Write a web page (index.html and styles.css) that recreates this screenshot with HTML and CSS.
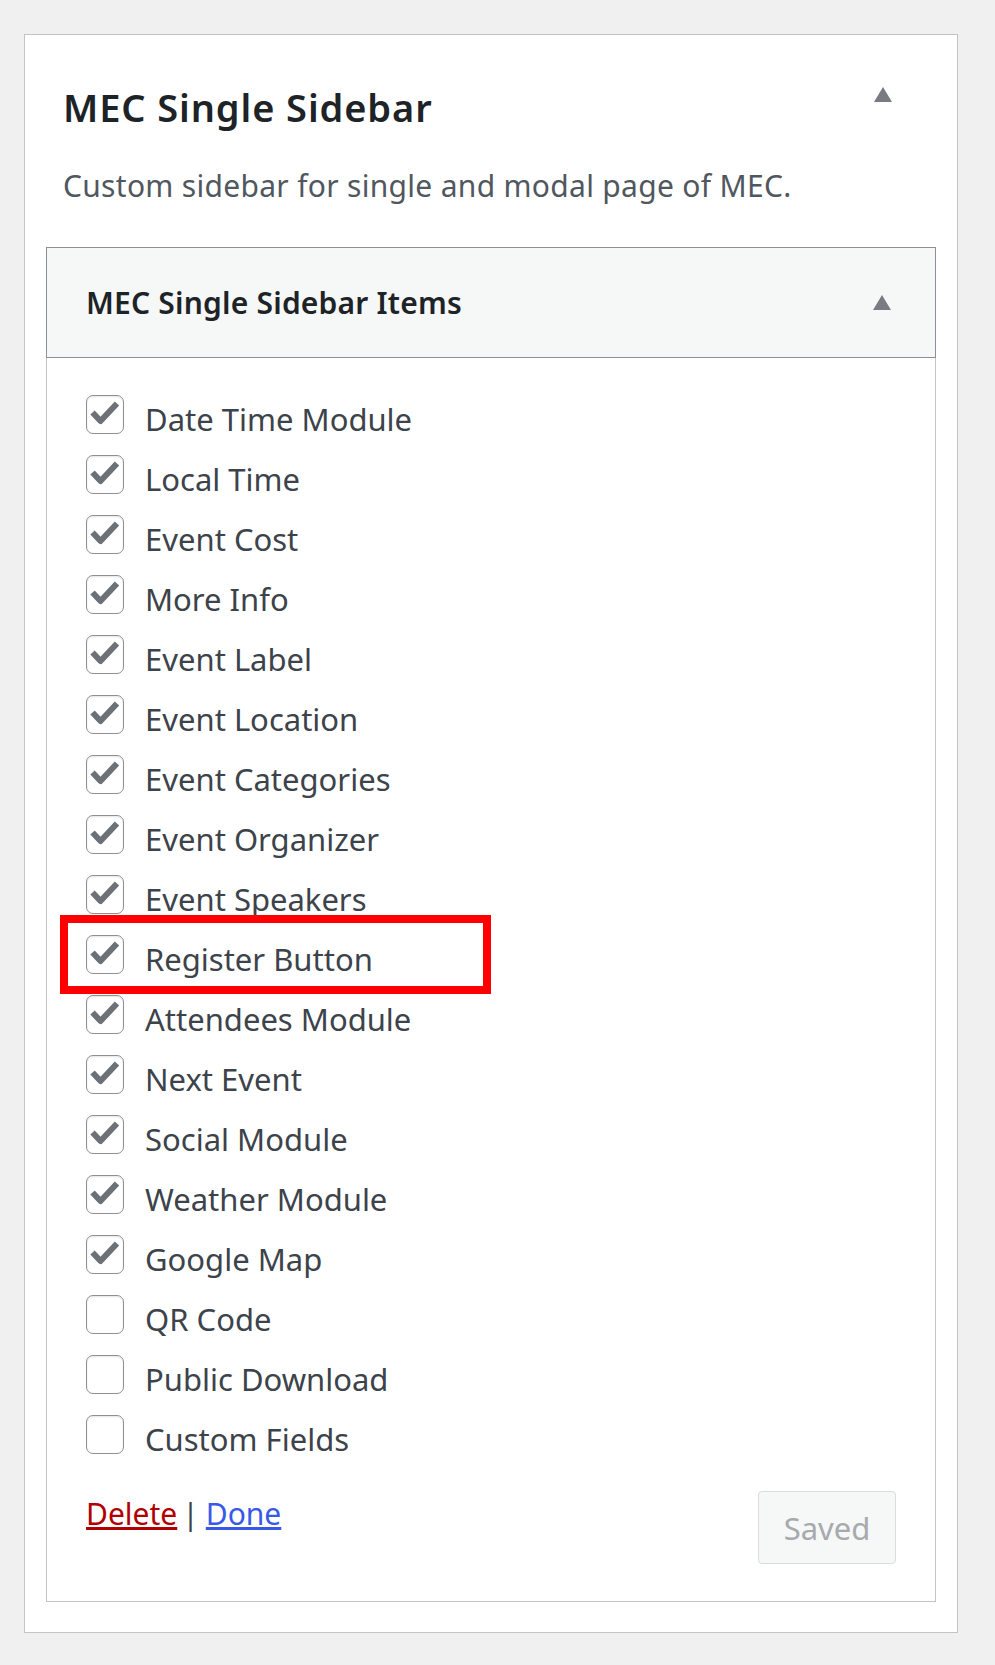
FILE: index.html
```html
<!DOCTYPE html>
<html lang="en">
<head>
<meta charset="utf-8">
<title>MEC Single Sidebar</title>
<link rel="stylesheet" href="styles.css">
</head>
<body>
<div class="panel">
  <div class="panel-head">
    <h2 class="panel-title">MEC Single Sidebar</h2>
    <span class="arrow" aria-hidden="true"></span>
  </div>
  <p class="panel-desc">Custom sidebar for single and modal page of MEC.</p>

  <div class="widget">
    <div class="widget-head">
      <h3 class="widget-title">MEC Single Sidebar Items</h3>
      <span class="arrow" aria-hidden="true"></span>
    </div>
    <div class="widget-body">
      <ul class="items">
        <li class="item"><span class="cb"><svg class="tick" viewBox="0 0 38 38"><polyline points="6.5,18.5 14.5,27 31,9.5"/></svg></span><span class="lbl">Date Time Module</span></li>
        <li class="item"><span class="cb"><svg class="tick" viewBox="0 0 38 38"><polyline points="6.5,18.5 14.5,27 31,9.5"/></svg></span><span class="lbl">Local Time</span></li>
        <li class="item"><span class="cb"><svg class="tick" viewBox="0 0 38 38"><polyline points="6.5,18.5 14.5,27 31,9.5"/></svg></span><span class="lbl">Event Cost</span></li>
        <li class="item"><span class="cb"><svg class="tick" viewBox="0 0 38 38"><polyline points="6.5,18.5 14.5,27 31,9.5"/></svg></span><span class="lbl">More Info</span></li>
        <li class="item"><span class="cb"><svg class="tick" viewBox="0 0 38 38"><polyline points="6.5,18.5 14.5,27 31,9.5"/></svg></span><span class="lbl">Event Label</span></li>
        <li class="item"><span class="cb"><svg class="tick" viewBox="0 0 38 38"><polyline points="6.5,18.5 14.5,27 31,9.5"/></svg></span><span class="lbl">Event Location</span></li>
        <li class="item"><span class="cb"><svg class="tick" viewBox="0 0 38 38"><polyline points="6.5,18.5 14.5,27 31,9.5"/></svg></span><span class="lbl">Event Categories</span></li>
        <li class="item"><span class="cb"><svg class="tick" viewBox="0 0 38 38"><polyline points="6.5,18.5 14.5,27 31,9.5"/></svg></span><span class="lbl">Event Organizer</span></li>
        <li class="item"><span class="cb"><svg class="tick" viewBox="0 0 38 38"><polyline points="6.5,18.5 14.5,27 31,9.5"/></svg></span><span class="lbl">Event Speakers</span></li>
        <li class="item"><span class="cb"><svg class="tick" viewBox="0 0 38 38"><polyline points="6.5,18.5 14.5,27 31,9.5"/></svg></span><span class="lbl">Register Button</span><span class="mark"></span></li>
        <li class="item"><span class="cb"><svg class="tick" viewBox="0 0 38 38"><polyline points="6.5,18.5 14.5,27 31,9.5"/></svg></span><span class="lbl">Attendees Module</span></li>
        <li class="item"><span class="cb"><svg class="tick" viewBox="0 0 38 38"><polyline points="6.5,18.5 14.5,27 31,9.5"/></svg></span><span class="lbl">Next Event</span></li>
        <li class="item"><span class="cb"><svg class="tick" viewBox="0 0 38 38"><polyline points="6.5,18.5 14.5,27 31,9.5"/></svg></span><span class="lbl">Social Module</span></li>
        <li class="item"><span class="cb"><svg class="tick" viewBox="0 0 38 38"><polyline points="6.5,18.5 14.5,27 31,9.5"/></svg></span><span class="lbl">Weather Module</span></li>
        <li class="item"><span class="cb"><svg class="tick" viewBox="0 0 38 38"><polyline points="6.5,18.5 14.5,27 31,9.5"/></svg></span><span class="lbl">Google Map</span></li>
        <li class="item"><span class="cb"></span><span class="lbl">QR Code</span></li>
        <li class="item"><span class="cb"></span><span class="lbl">Public Download</span></li>
        <li class="item"><span class="cb"></span><span class="lbl">Custom Fields</span></li>
      </ul>
      <div class="actions">
        <div class="links"><a class="del" href="#">Delete</a><span class="sep">|</span><a class="done" href="#">Done</a></div>
        <button class="saved" type="button" disabled>Saved</button>
      </div>
    </div>
  </div>
</div>
</body>
</html>
```

FILE: styles.css
```css
* { box-sizing: border-box; }

body {
  margin: 0;
  background: #f0f0f1;
  font-family: "Noto Sans", "Open Sans", sans-serif;
  color: #3c434a;
}

.panel {
  margin: 34px 0 0 24px;
  width: 934px;
  height: 1599px;
  background: #fff;
  border: 1px solid #c3c4c7;
  padding: 50px 21px 0 21px;
}

.panel-head {
  display: flex;
  justify-content: space-between;
  align-items: flex-start;
  padding: 0 44px 0 17px;
}

.panel-title {
  margin: 0;
  font-size: 38px;
  line-height: 44px;
  font-weight: 600;
  letter-spacing: 0.9px;
  color: #1d2327;
}

.arrow {
  width: 0;
  height: 0;
  margin-top: 2px;
  border-left: 9.5px solid transparent;
  border-right: 9.5px solid transparent;
  border-bottom: 15px solid #787c82;
}

.panel-desc {
  margin: 37px 0 41px 17px;
  font-size: 30px;
  line-height: 40px;
  letter-spacing: 0.3px;
  color: #50575e;
}

.widget {
  border: 1px solid #c3c4c7;
  height: 1355px;
}

.widget-head {
  height: 111px;
  margin: -1px -1px 0 -1px;
  border: 1px solid #8c8f94;
  background: #f6f7f7;
  display: flex;
  justify-content: space-between;
  align-items: center;
  padding: 0 44px 0 39px;
}

.widget-head .arrow { margin-top: 0; }

.widget-title {
  margin: 0;
  font-size: 30px;
  line-height: 40px;
  font-weight: 600;
  letter-spacing: 0.2px;
  color: #1d2327;
}

.widget-body {
  padding: 31px 39px 0 39px;
}

.items {
  list-style: none;
  margin: 0;
  padding: 0;
}

.item {
  position: relative;
  height: 60px;
  display: flex;
  align-items: center;
}

.cb {
  flex: none;
  width: 38px;
  height: 39px;
  margin-top: -10px;
  margin-right: 21px;
  border: 1.5px solid #8c8f94;
  border-radius: 7px;
  background: #fff;
  box-shadow: inset 0 1px 2px rgba(0, 0, 0, 0.1);
  position: relative;
}

.tick {
  position: absolute;
  left: -1.5px;
  top: -1.5px;
  width: 38px;
  height: 38px;
  fill: none;
  stroke: #6c7177;
  stroke-width: 6;
  stroke-linecap: butt;
  stroke-linejoin: round;
}

.lbl {
  font-size: 31px;
  line-height: 60px;
  color: #3c434a;
}

.mark {
  position: absolute;
  left: -26px;
  top: -14px;
  width: 431px;
  height: 79px;
  border: 8px solid #ff0000;
}

.actions {
  display: flex;
  justify-content: space-between;
  align-items: flex-start;
  padding-top: 25px;
}

.links {
  font-size: 30px;
  line-height: 40px;
  color: #3c434a;
}

.sep {
  margin: 0 7px 0 5px;
  color: #3c434a;
}

.del { color: #b00000; }
.done { color: #3858e9; }

.saved {
  margin-top: -3px;
  width: 138px;
  height: 73px;
  border: 1px solid #dcdcde;
  border-radius: 4px;
  background: #f6f7f7;
  color: #a7aaad;
  font-family: "Noto Sans", "Open Sans", sans-serif;
  font-size: 31px;
  padding: 0;
}
```
